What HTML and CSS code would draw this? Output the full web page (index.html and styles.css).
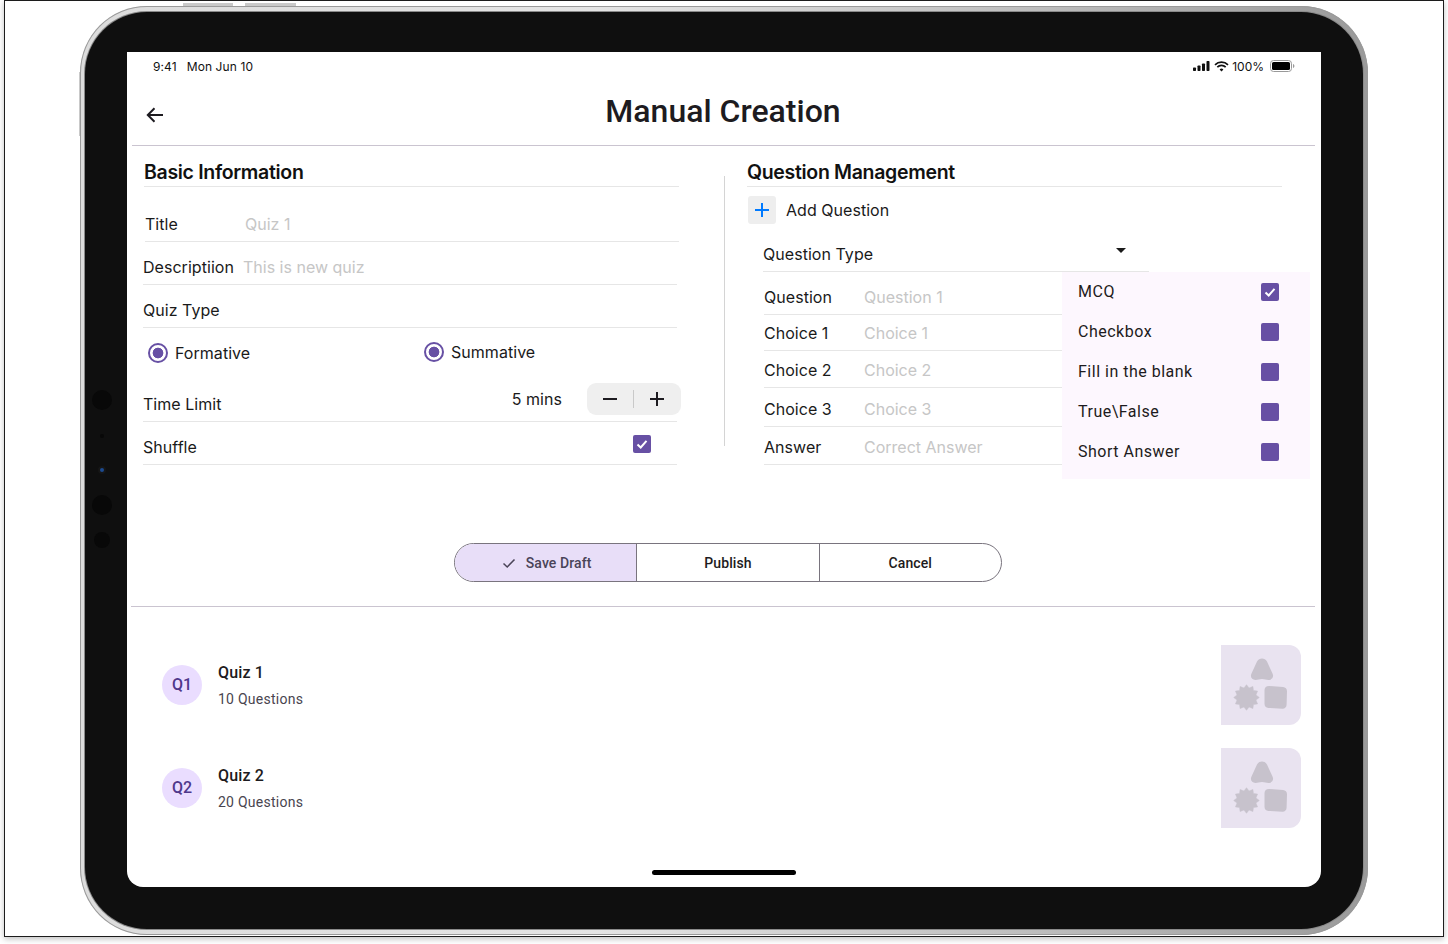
FILE: index.html
```html
<!DOCTYPE html>
<html lang="en">

<head>
    <meta charset="UTF-8">
    <meta name="viewport" content="width=device-width, initial-scale=1.0">
    <title>Manual Creation</title>
    <link rel="stylesheet" href="styles.css">
</head>

<body>
    <div class="frame">
        <div class="device">
            <span class="hw-btn hw-top-a"></span>
            <span class="hw-btn hw-top-b"></span>
            <span class="hw-btn hw-side"></span>

            <div class="bezel">
                <!-- Cameras and sensors -->
                <span class="sensor sensor-a"></span>
                <span class="sensor sensor-b"></span>
                <span class="sensor sensor-c"></span>
                <span class="sensor sensor-d"></span>
                <span class="sensor sensor-e"></span>

                <div class="screen">
                    <div class="status-bar">
                        <div class="status-time">
                            <span>9:41</span>
                            <span class="status-date">Mon Jun 10</span>
                        </div>
                        <div class="status-icons">
                            <svg width="17" height="10" viewBox="0 0 17 10">
                                <rect x="0" y="6.5" width="3" height="3.5" rx="0.7" fill="#111" />
                                <rect x="4.5" y="4.5" width="3" height="5.5" rx="0.7" fill="#111" />
                                <rect x="9" y="2.5" width="3" height="7.5" rx="0.7" fill="#111" />
                                <rect x="13.5" y="0" width="3" height="10" rx="0.7" fill="#111" />
                            </svg>
                            <svg class="wifi" width="15" height="11" viewBox="0 0 15 11" fill="none" stroke="#111" stroke-width="1.7">
                                <path d="M1 3.8a9.2 9.2 0 0 1 13 0" />
                                <path d="M3.3 6.2a5.9 5.9 0 0 1 8.4 0" />
                                <path d="M7.5 10.6 5.6 8.5a2.7 2.7 0 0 1 3.8 0z" fill="#111" stroke="none" />
                            </svg>
                            <span class="status-pct">100%</span>
                            <svg class="battery" width="25" height="12" viewBox="0 0 25 12">
                                <rect x="0.5" y="0.5" width="21" height="11" rx="3" fill="none" stroke="#999" />
                                <rect x="2" y="2" width="18" height="8" rx="1.6" fill="#000" />
                                <path d="M23 4v4c.8-.3 1.4-1.1 1.4-2S23.800 4.300 23 4z" fill="#999" />
                            </svg>
                        </div>
                    </div>

                    <div class="header">
                        <svg class="back" width="18" height="16" viewBox="0 0 18 16" fill="none" stroke="#1d1b20" stroke-width="2">
                            <path d="M17 8H2M8.500 1.300 1.800 8l6.700 6.700" />
                        </svg>
                        <h1>Manual Creation</h1>
                    </div>
                    <div class="rule rule-top"></div>

                    <div class="main">
                        <!-- Left column -->
                        <section class="col-left">
                            <h2 class="section-title">Basic Information</h2>

                            <div class="field field-first">
                                <span class="label label-wide">Title</span>
                                <span class="hint">Quiz 1</span>
                            </div>
                            <div class="field">
                                <span class="label label-wide">Descriptiion</span>
                                <span class="hint">This is new quiz</span>
                            </div>
                            <div class="field">
                                <span class="label">Quiz Type</span>
                            </div>

                            <div class="radio-row">
                                <div class="radio-item">
                                    <span class="radio"></span>
                                    <span class="label">Formative</span>
                                </div>
                                <div class="radio-item radio-item-2">
                                    <span class="radio"></span>
                                    <span class="label">Summative</span>
                                </div>
                            </div>

                            <div class="field">
                                <span class="label grow">Time Limit</span>
                                <span class="label time-value">5 mins</span>
                                <div class="stepper">
                                    <svg width="14" height="14" viewBox="0 0 14 14" stroke="#1d1b20" stroke-width="2">
                                        <path d="M0 7h14" />
                                    </svg>
                                    <span class="stepper-sep"></span>
                                    <svg width="14" height="14" viewBox="0 0 14 14" stroke="#1d1b20" stroke-width="2">
                                        <path d="M0 7h14M7 0v14" />
                                    </svg>
                                </div>
                            </div>

                            <div class="field">
                                <span class="label grow">Shuffle</span>
                                <span class="check check-shuffle">
                                    <svg width="18" height="18" viewBox="0 0 18 18" fill="none" stroke="#fff" stroke-width="2">
                                        <path d="M4.500 9.500 7.700 12.500 13.500 5.800" />
                                    </svg>
                                </span>
                            </div>
                        </section>

                        <div class="col-sep"></div>

                        <!-- Right column -->
                        <section class="col-right">
                            <h2 class="section-title">Question Management</h2>

                            <div class="add-row">
                                <span class="add-btn">
                                    <svg width="14" height="14" viewBox="0 0 14 14" stroke="#007aff" stroke-width="2">
                                        <path d="M0 7h14M7 0v14" />
                                    </svg>
                                </span>
                                <span class="label">Add Question</span>
                            </div>

                            <div class="type-row">
                                <span class="label grow">Question Type</span>
                                <span class="caret"></span>
                            </div>

                            <div class="questions">
                                <div class="q-row"><span class="label label-wide">Question</span><span class="hint">Question 1</span></div>
                                <div class="q-row"><span class="label label-wide">Choice 1</span><span class="hint">Choice 1</span></div>
                                <div class="q-row"><span class="label label-wide">Choice 2</span><span class="hint">Choice 2</span></div>
                                <div class="q-row"><span class="label label-wide">Choice 3</span><span class="hint">Choice 3</span></div>
                                <div class="q-row"><span class="label label-wide">Answer</span><span class="hint">Correct Answer</span></div>

                                <div class="type-menu">
                                    <div class="menu-item">
                                        <span class="menu-text">MCQ</span>
                                        <span class="check">
                                            <svg width="18" height="18" viewBox="0 0 18 18" fill="none" stroke="#fff" stroke-width="2">
                                                <path d="M4.500 9.500 7.700 12.500 13.500 5.800" />
                                            </svg>
                                        </span>
                                    </div>
                                    <div class="menu-item"><span class="menu-text">Checkbox</span><span class="check"></span></div>
                                    <div class="menu-item"><span class="menu-text">Fill in the blank</span><span class="check"></span></div>
                                    <div class="menu-item"><span class="menu-text">True\False</span><span class="check"></span></div>
                                    <div class="menu-item"><span class="menu-text">Short Answer</span><span class="check"></span></div>
                                </div>
                            </div>
                        </section>
                    </div>

                    <div class="segmented">
                        <div class="segment segment-on">
                            <svg width="18" height="18" viewBox="0 0 18 18" fill="none" stroke="#4a4458" stroke-width="1.500">
                                <path d="M3.500 9.500 7.200 13 14.500 5.500" />
                            </svg>
                            Save Draft
                        </div>
                        <div class="segment">Publish</div>
                        <div class="segment">Cancel</div>
                    </div>

                    <div class="rule rule-list"></div>

                    <div class="quiz-list">
                        <div class="quiz-item">
                            <span class="avatar">Q1</span>
                            <div class="quiz-text">
                                <div class="quiz-name">Quiz 1</div>
                                <div class="quiz-count">10 Questions</div>
                            </div>
                            <div class="thumb">
                                <svg width="80" height="80" viewBox="0 0 80 80" fill="#c7c2cc">
                                    <path d="M36 16.500c2-4 8-4 10 0l5.500 12c1.700 3.500-.5 6.500-4 6.500-2.300 0-3.800-1-6.500-1s-4.200 1-6.500 1c-3.500 0-5.700-3-4-6.500z" />
                                    <polygon stroke="#c7c2cc" stroke-width="0.5" stroke-linejoin="round" points="38.300,52.500 34.970,55.040 36.580,58.900 32.430,59.430 31.900,63.580 28.040,61.970 25.500,65.300 22.960,61.970 19.100,63.580 18.570,59.430 14.420,58.900 16.030,55.040 12.700,52.500 16.030,49.960 14.420,46.100 18.570,45.570 19.100,41.420 22.960,43.030 25.500,39.700 28.040,43.030 31.900,41.420 32.430,45.570 36.580,46.100 34.970,49.960" />
                                    <path d="M48.500 41l13.500 1c2.500.2 4 1.800 4 4.200l-.4 13.600c-.1 2.500-1.800 4-4.200 3.900l-14-.8c-2.400-.2-3.900-1.800-3.900-4.200V45c0-2.500 2-4.200 5-4z" />
                                </svg>
                            </div>
                        </div>

                        <div class="quiz-item">
                            <span class="avatar">Q2</span>
                            <div class="quiz-text">
                                <div class="quiz-name">Quiz 2</div>
                                <div class="quiz-count">20 Questions</div>
                            </div>
                            <div class="thumb">
                                <svg width="80" height="80" viewBox="0 0 80 80" fill="#c7c2cc">
                                    <path d="M36 16.500c2-4 8-4 10 0l5.500 12c1.700 3.500-.5 6.500-4 6.500-2.300 0-3.800-1-6.500-1s-4.200 1-6.500 1c-3.500 0-5.700-3-4-6.500z" />
                                    <polygon stroke="#c7c2cc" stroke-width="0.5" stroke-linejoin="round" points="38.300,52.500 34.970,55.040 36.580,58.900 32.430,59.430 31.900,63.580 28.040,61.970 25.500,65.300 22.960,61.970 19.100,63.580 18.570,59.430 14.420,58.900 16.030,55.040 12.700,52.500 16.030,49.960 14.420,46.100 18.570,45.570 19.100,41.420 22.960,43.030 25.500,39.700 28.040,43.030 31.900,41.420 32.430,45.570 36.580,46.100 34.970,49.960" />
                                    <path d="M48.500 41l13.500 1c2.500.2 4 1.800 4 4.200l-.4 13.600c-.1 2.500-1.800 4-4.200 3.900l-14-.8c-2.400-.2-3.900-1.800-3.900-4.200V45c0-2.500 2-4.200 5-4z" />
                                </svg>
                            </div>
                        </div>
                    </div>

                    <div class="home-bar"></div>
                </div>
            </div>
        </div>
    </div>
</body>

</html>
```

FILE: styles.css
```css
* {
    box-sizing: border-box;
}

html,
body {
    margin: 0;
    height: 100%;
    background: #fff;
    overflow: hidden;
}

body {
    font-family: Inter, "Liberation Sans", sans-serif;
    color: #1d1b20;
}

.frame {
    width: 1440px;
    height: 937px;
    margin-left: 4px;
    padding: 5px 0 0 75px;
    border: 1px solid #1c1c1c;
    background: #fff;
    box-shadow: 0 2px 6px rgba(0, 0, 0, 0.25);
}

/* Tablet shell */
.device {
    position: relative;
    width: 1288px;
    height: 929px;
    padding: 6px 5px;
    border-radius: 67px;
    background: linear-gradient(90deg, #dcdcdc 0%, #e4e4e4 40%, #bcbcbc 75%, #9a9a9a 100%);
    box-shadow: inset 0 0 0 1px #9a9a9a;
}

.hw-btn {
    position: absolute;
    background: #c9c9c9;
}

.hw-top-a {
    top: -3px;
    left: 103px;
    width: 50px;
    height: 3px;
}

.hw-top-b {
    top: -3px;
    left: 165px;
    width: 51px;
    height: 3px;
}

.hw-side {
    top: 66px;
    left: -1px;
    width: 1px;
    height: 64px;
}

.bezel {
    position: relative;
    width: 100%;
    height: 100%;
    padding: 40px 41px 41px 42px;
    border-radius: 62px;
    background: #0f0f0f;
    box-shadow: 0 0 0 1px #8a8a8a;
}

.sensor {
    position: absolute;
    left: 7px;
    border-radius: 50%;
    background: #080808;
}

.sensor-a {
    top: 378px;
    width: 20px;
    height: 20px;
}

.sensor-b {
    top: 422px;
    left: 15px;
    width: 4px;
    height: 4px;
}

.sensor-c {
    top: 456px;
    left: 15px;
    width: 4px;
    height: 4px;
    background: #1c4a8f;
    box-shadow: 0 0 0 2px #161616;
}

.sensor-d {
    top: 483px;
    width: 20px;
    height: 20px;
}

.sensor-e {
    top: 520px;
    left: 9px;
    width: 16px;
    height: 16px;
}

.screen {
    display: flex;
    flex-direction: column;
    width: 1194px;
    height: 835px;
    background: #fff;
    border-radius: 0 0 16px 16px;
    overflow: hidden;
}

.status-bar {
    display: flex;
    align-items: center;
    justify-content: space-between;
    height: 28px;
    padding: 0 26px;
    font-size: 12px;
    color: #111;
}

.status-time {
    display: flex;
    gap: 10px;
    letter-spacing: 0.1px;
}

.status-icons {
    display: flex;
    align-items: center;
}

.wifi {
    margin-left: 4px;
}

.status-pct {
    margin-left: 3px;
}

.battery {
    margin-left: 6px;
}

.header {
    display: flex;
    align-items: center;
    position: relative;
    height: 65px;
    padding-bottom: 3px;
}

.back {
    position: absolute;
    left: 19px;
    top: 27px;
}

h1 {
    flex: 1;
    margin: 0 2px 0 0;
    font-family: Roboto, sans-serif;
    font-size: 32px;
    font-weight: 500;
    line-height: 38px;
    text-align: center;
}

.rule {
    height: 1px;
    background: #cac4d0;
}

.rule-top {
    margin: 0 6px 0 5px;
}

.main {
    display: flex;
    align-items: flex-start;
    padding-left: 16px;
}

.section-title {
    margin: 0;
    height: 41px;
    padding-top: 14px;
    font-size: 19.5px;
    font-weight: 600;
    line-height: 24px;
    letter-spacing: -0.32px;
    color: #111;
    border-bottom: 1px solid #e6e6e6;
}

.col-left {
    width: 536px;
}

.col-left .section-title {
    margin-left: 1px;
}

.col-sep {
    width: 1px;
    height: 270px;
    margin: 30px 22px 0 45px;
    background: #d4d4d4;
}

.col-right {
    width: 535px;
}

.label {
    font-size: 16px;
    line-height: 20px;
    letter-spacing: 0.04px;
    color: #1a1a1a;
}

.label-wide {
    flex: none;
    width: 100px;
}

.hint {
    font-size: 16px;
    line-height: 20px;
    color: #c6c6c6;
}

.grow {
    flex: 1;
}

.field {
    display: flex;
    align-items: flex-end;
    height: 43px;
    margin-right: 2px;
    padding-bottom: 7px;
    border-bottom: 1px solid #e6e6e6;
}

.field-first {
    height: 55px;
    margin: 0 0 0 2px;
}

.radio-row {
    display: flex;
    height: 51px;
    padding: 15px 0 0 5px;
}

.radio-item {
    display: flex;
    flex: none;
    align-items: center;
    gap: 7px;
    width: 276px;
    height: 20px;
}

.radio-item-2 {
    width: auto;
    margin-top: -1px;
}

.radio {
    width: 20px;
    height: 20px;
    border: 2px solid #6750a4;
    border-radius: 50%;
    background: radial-gradient(circle, #6750a4 0, #6750a4 5px, #fff 5.7px);
}

.time-value {
    margin-bottom: 5px;
}

.stepper {
    display: flex;
    align-items: center;
    justify-content: space-between;
    width: 94px;
    height: 32px;
    margin: 0 -4px -1px 25px;
    padding: 0 17px 0 16px;
    border-radius: 9px;
    background: #efefef;
}

.stepper-sep {
    width: 1px;
    height: 18px;
    background: #c9c9c9;
}

.check {
    display: block;
    width: 18px;
    height: 18px;
    border-radius: 2px;
    background: #6750a4;
}

.check svg {
    display: block;
}

.check-shuffle {
    margin: 0 26px 4px 0;
}

.add-row {
    display: flex;
    align-items: center;
    gap: 10px;
    height: 28px;
    margin: 9px 0 0 1px;
}

.add-btn {
    display: flex;
    align-items: center;
    justify-content: center;
    width: 28px;
    height: 28px;
    border-radius: 3px;
    background: #eee;
}

.type-row {
    display: flex;
    align-items: flex-end;
    width: 386px;
    height: 48px;
    margin-left: 16px;
    padding-bottom: 7px;
    border-bottom: 1px solid #e6e6e6;
}

.caret {
    width: 0;
    height: 0;
    margin: 0 23px 11px 0;
    border-left: 5px solid transparent;
    border-right: 5px solid transparent;
    border-top: 5px solid #1a1a1a;
}

.questions {
    position: relative;
    display: grid;
    grid-template-rows: 43px 36px 37px 39px 38px;
    margin-left: 17px;
}

.q-row {
    display: flex;
    align-items: flex-end;
    padding-bottom: 7px;
    border-bottom: 1px solid #e6e6e6;
}

/* Dropdown over the question rows */
.type-menu {
    position: absolute;
    top: 0;
    left: 298px;
    width: 248px;
    height: 207px;
    background: #fdf7fe;
}

.menu-item {
    display: flex;
    align-items: center;
    justify-content: space-between;
    height: 40px;
    padding: 0 31px 0 16px;
    font-family: Roboto, sans-serif;
    font-size: 16px;
    letter-spacing: 0.5px;
    color: #1d1b20;
}

.menu-text {
    margin-bottom: 2px;
}

.segmented {
    display: flex;
    width: 548px;
    height: 39px;
    margin: 78px 0 0 327px;
    border: 1px solid #79747e;
    border-radius: 20px;
    overflow: hidden;
    font-family: Roboto, sans-serif;
    font-size: 14px;
    font-weight: 500;
    letter-spacing: 0.1px;
}

.segment {
    display: flex;
    flex: 1;
    align-items: center;
    justify-content: center;
    gap: 8px;
    border-left: 1px solid #79747e;
}

.segment:first-child {
    border-left: none;
}

.segment-on {
    background: #e8def8;
    color: #4a4458;
}

.rule-list {
    width: 1184px;
    margin: 24px 0 0 4px;
}

.quiz-list {
    display: flex;
    flex-direction: column;
    gap: 23px;
    padding: 38px 20px 0 35px;
}

.quiz-item {
    display: flex;
    align-items: center;
    height: 80px;
}

.avatar {
    display: flex;
    align-items: center;
    justify-content: center;
    width: 40px;
    height: 40px;
    margin-right: 16px;
    padding-bottom: 2px;
    border-radius: 50%;
    background: #eaddff;
    color: #4f378b;
    font-family: Roboto, sans-serif;
    font-size: 16px;
    font-weight: 500;
}

.quiz-text {
    flex: 1;
    font-family: Roboto, sans-serif;
}

.quiz-name {
    font-size: 16px;
    font-weight: 500;
    line-height: 24px;
    letter-spacing: 0.15px;
}

.quiz-count {
    margin-top: 4px;
    font-size: 14px;
    line-height: 20px;
    letter-spacing: 0.25px;
    color: #49454f;
}

.thumb {
    width: 80px;
    height: 80px;
    border-radius: 0 12px 12px 0;
    background: #e9e3f0;
}

.thumb svg {
    display: block;
}

.home-bar {
    align-self: center;
    width: 144px;
    height: 5px;
    margin-top: auto;
    margin-bottom: 12px;
    border-radius: 3px;
    background: #000;
}
```
